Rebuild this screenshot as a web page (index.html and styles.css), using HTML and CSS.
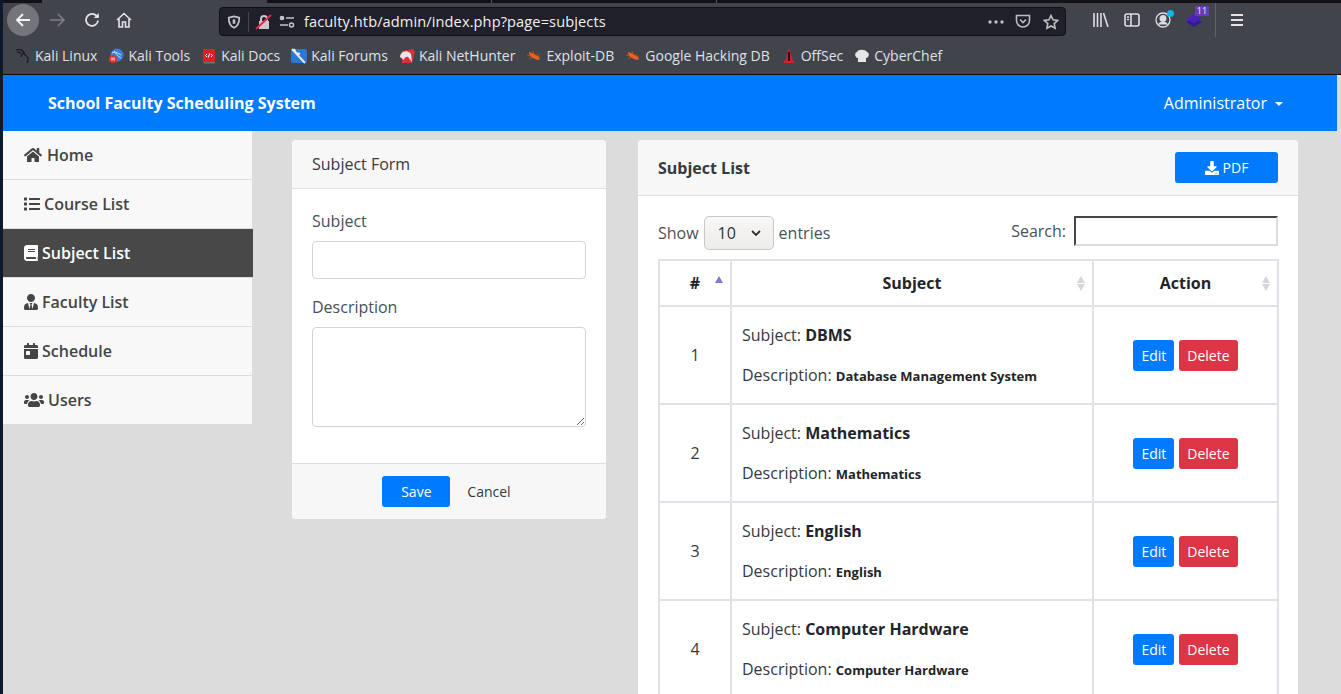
FILE: index.html
```html
<!DOCTYPE html>
<html lang="en">
  <head>
    <meta charset="UTF-8" />
    <title>School Faculty Scheduling System</title>
    <link rel="stylesheet" href="styles.css">
  </head>
  <body>
    <svg class="defs" aria-hidden="true">
      <symbol id="i-home" viewBox="0 0 576 512"><path d="M280.37 148.26L96 300.11V464a16 16 0 0 0 16 16l112.06-.29a16 16 0 0 0 15.92-16V368a16 16 0 0 1 16-16h64a16 16 0 0 1 16 16v95.64a16 16 0 0 0 16 16.05L464 480a16 16 0 0 0 16-16V300L295.67 148.26a12.19 12.19 0 0 0-15.3 0zM571.6 251.47L488 182.56V44.05a12 12 0 0 0-12-12h-56a12 12 0 0 0-12 12v72.61L318.47 43a48 48 0 0 0-61 0L4.34 251.47a12 12 0 0 0-1.6 16.9l25.5 31A12 12 0 0 0 45.15 301l235.22-193.74a12.19 12.19 0 0 1 15.3 0L530.9 301a12 12 0 0 0 16.9-1.6l25.5-31a12 12 0 0 0-1.7-16.93z"/></symbol>
      <symbol id="i-list" viewBox="0 0 512 512"><path d="M80 368H16a16 16 0 0 0-16 16v64a16 16 0 0 0 16 16h64a16 16 0 0 0 16-16v-64a16 16 0 0 0-16-16zm0-320H16A16 16 0 0 0 0 64v64a16 16 0 0 0 16 16h64a16 16 0 0 0 16-16V64a16 16 0 0 0-16-16zm0 160H16a16 16 0 0 0-16 16v64a16 16 0 0 0 16 16h64a16 16 0 0 0 16-16v-64a16 16 0 0 0-16-16zm416 176H176a16 16 0 0 0-16 16v32a16 16 0 0 0 16 16h320a16 16 0 0 0 16-16v-32a16 16 0 0 0-16-16zm0-320H176a16 16 0 0 0-16 16v32a16 16 0 0 0 16 16h320a16 16 0 0 0 16-16V80a16 16 0 0 0-16-16zm0 160H176a16 16 0 0 0-16 16v32a16 16 0 0 0 16 16h320a16 16 0 0 0 16-16v-32a16 16 0 0 0-16-16z"/></symbol>
      <symbol id="i-book" viewBox="0 0 448 512"><path d="M448 360V24c0-13.3-10.7-24-24-24H96C43 0 0 43 0 96v320c0 53 43 96 96 96h328c13.3 0 24-10.7 24-24v-16c0-7.5-3.5-14.3-8.9-18.7-4.2-15.4-4.2-59.3 0-74.7 5.4-4.3 8.9-11.1 8.9-18.6zM128 134c0-3.3 2.7-6 6-6h212c3.3 0 6 2.7 6 6v20c0 3.3-2.7 6-6 6H134c-3.3 0-6-2.7-6-6v-20zm0 64c0-3.3 2.7-6 6-6h212c3.3 0 6 2.7 6 6v20c0 3.3-2.7 6-6 6H134c-3.3 0-6-2.7-6-6v-20zm253.4 250H96c-17.7 0-32-14.3-32-32 0-17.6 14.4-32 32-32h285.4c-1.9 17.1-1.9 46.9 0 64z"/></symbol>
      <symbol id="i-user" viewBox="0 0 448 512"><path d="M224 256c70.7 0 128-57.3 128-128S294.7 0 224 0 96 57.3 96 128s57.3 128 128 128zm95.8 32.6L272 480l-32-136 32-56h-96l32 56-32 136-47.8-191.4C56.9 292 0 350.3 0 422.4V464c0 26.5 21.5 48 48 48h352c26.5 0 48-21.5 48-48v-41.6c0-72.1-56.9-130.4-128.2-133.8z"/></symbol>
      <symbol id="i-cal" viewBox="0 0 448 512"><path d="M0 464c0 26.5 21.5 48 48 48h352c26.5 0 48-21.5 48-48V192H0v272zm64-192c0-8.8 7.2-16 16-16h96c8.8 0 16 7.2 16 16v96c0 8.8-7.2 16-16 16H80c-8.8 0-16-7.2-16-16v-96zM400 64h-48V16c0-8.8-7.2-16-16-16h-32c-8.8 0-16 7.2-16 16v48H160V16c0-8.8-7.2-16-16-16h-32c-8.8 0-16 7.2-16 16v48H48C21.5 64 0 85.5 0 112v48h448v-48c0-26.5-21.5-48-48-48z"/></symbol>
      <symbol id="i-users" viewBox="0 0 640 512"><path d="M96 224c35.3 0 64-28.7 64-64s-28.7-64-64-64-64 28.7-64 64 28.7 64 64 64zm448 0c35.3 0 64-28.7 64-64s-28.7-64-64-64-64 28.7-64 64 28.7 64 64 64zm32 32h-64c-17.6 0-33.5 7.1-45.1 18.6 40.3 22.1 68.9 62 75.1 109.4h66c17.7 0 32-14.3 32-32v-32c0-35.3-28.7-64-64-64zm-256 0c61.9 0 112-50.1 112-112S381.9 32 320 32 208 82.1 208 144s50.1 112 112 112zm76.8 32h-8.3c-20.8 10-43.9 16-68.5 16s-47.6-6-68.5-16h-8.3C179.6 288 128 339.6 128 403.2V432c0 26.5 21.5 48 48 48h288c26.5 0 48-21.5 48-48v-28.8c0-63.6-51.6-115.2-115.2-115.2zm-223.7-13.4C161.5 263.1 145.6 256 128 256H64c-35.3 0-64 28.7-64 64v32c0 17.7 14.3 32 32 32h65.9c6.3-47.4 34.9-87.3 75.2-109.4z"/></symbol>
      <symbol id="i-download" viewBox="0 0 512 512"><path d="M216 0h80c13.3 0 24 10.7 24 24v168h87.7c17.8 0 26.7 21.5 14.1 34.1L269.7 378.3c-7.5 7.5-19.8 7.5-27.3 0L90.1 226.1c-12.6-12.6-3.7-34.1 14.1-34.1H192V24c0-13.3 10.7-24 24-24zm296 376v112c0 13.3-10.7 24-24 24H24c-13.3 0-24-10.7-24-24V376c0-13.3 10.7-24 24-24h146.7l49 49c20.1 20.1 52.5 20.1 72.6 0l49-49H488c13.3 0 24 10.7 24 24zm-124 88c0-11-9-20-20-20s-20 9-20 20 9 20 20 20 20-9 20-20zm64 0c0-11-9-20-20-20s-20 9-20 20 9 20 20 20 20-9 20-20z"/></symbol>
      <symbol id="i-bug" viewBox="0 0 16 16"><path fill="#e8601c" d="M3 4l3 1 4 2 3 2 1 2-2 1-3-1-4-2-2-3z"/><path stroke="#c9480f" fill="none" d="M1 7l3 1M3 11l3-2M7 3l1 3M12 6l-1 2M14 8l-2 1"/></symbol>
    </svg>

    <div class="edge"></div>
    <div class="window">
      <div class="tabstrip">
        <span class="tab-dark tab-first"></span>
        <span class="tab-active"></span>
        <span class="tab-dark tab-mid"></span>
        <span class="tab-dark tab-mid"></span>
        <span class="tab-dark tab-rest"></span>
      </div>

      <div class="toolbar">
        <span class="nav-back">
          <svg width="16" height="16" viewBox="0 0 16 16" fill="none" stroke="#f2f2f2" stroke-width="1.8"><path d="M15 8H2M8 2L2 8l6 6"/></svg>
        </span>
        <svg class="nav-icon nav-fwd" width="16" height="16" viewBox="0 0 16 16" fill="none" stroke="#7d7e83" stroke-width="1.6"><path d="M0 8h14M8 2l6 6-6 6"/></svg>
        <svg class="nav-icon nav-reload" width="16" height="16" viewBox="0 0 16 16" fill="none" stroke="#e4e4e6" stroke-width="1.8"><path d="M14 8.5A6 6 0 1 1 11.5 3L14 5"/><path d="M14.8 1v5h-5" fill="#e4e4e6" stroke="none"/></svg>
        <svg class="nav-icon nav-home" width="16" height="16" viewBox="0 0 16 16" fill="none" stroke="#e4e4e6" stroke-width="1.6"><path d="M1 8l7-6.5L15 8M3 7v8h3.5v-5h3v5H13V7"/></svg>

        <div class="urlbar">
          <svg class="url-shield" width="14" height="14" viewBox="0 0 16 16" fill="none" stroke="#c4c4c8" stroke-width="2"><path d="M8 1.5l6 1.5c0 6-1.5 9.5-6 11.5C3.500 12.500 2 9 2 3z"/><path d="M8 5v5" stroke-width="3"/></svg>
          <span class="url-sep"></span>
          <svg class="url-lock" width="18" height="18" viewBox="0 0 18 18"><path d="M5 8V6a4 4 0 0 1 8 0v2h1v8H4V8zM7 8h4V6a2 2 0 0 0-4 0z" fill="#c8c8cc"/><path d="M1 16L16 2" stroke="#e22850" stroke-width="2"/></svg>
          <svg class="url-perm" width="16" height="14" viewBox="0 0 16 14" fill="none" stroke="#c4c4c8" stroke-width="1.500"><circle cx="3" cy="3" r="1.600" fill="#c4c4c8"/><path d="M7 3h8M1 10h8"/><circle cx="12.500" cy="10" r="2"/></svg>
          <span class="url-text">faculty.htb/admin/index.php?page=subjects</span>
          <svg class="url-dots" width="16" height="4" viewBox="0 0 16 4" fill="#bdbdc2"><circle cx="2" cy="2" r="1.700"/><circle cx="8" cy="2" r="1.700"/><circle cx="14" cy="2" r="1.700"/></svg>
          <svg class="url-pocket" width="16" height="15" viewBox="0 0 16 15" fill="none" stroke="#bdbdc2" stroke-width="1.600"><path d="M1.500 1.500h13v5a6.500 6.500 0 0 1-13 0z"/><path d="M5 5.500l3 3 3-3"/></svg>
          <svg class="url-star" width="16" height="16" viewBox="0 0 16 16" fill="none" stroke="#bdbdc2" stroke-width="1.600"><path d="M8 1.500l2 4.300 4.700.6-3.500 3.200.9 4.700L8 12l-4.100 2.300.9-4.700L1.300 6.400 6 5.800z"/></svg>
        </div>

        <div class="tool-right">
          <svg width="16" height="14" viewBox="0 0 16 14" fill="none" stroke="#dcdce0" stroke-width="1.600"><path d="M1 0v14M4.500 0v14M8 0v14M10.500 0l4.500 14"/></svg>
          <svg width="16" height="14" viewBox="0 0 16 14" fill="none" stroke="#dcdce0" stroke-width="1.600"><rect x="1" y="1" width="14" height="12" rx="2"/><path d="M7 1v12M3 4h2M3 6.500h2"/></svg>
          <span class="tool-account">
            <svg width="16" height="16" viewBox="0 0 16 16" fill="none" stroke="#dcdce0" stroke-width="1.300"><circle cx="8" cy="8" r="7"/><circle cx="8" cy="6.500" r="2.800" fill="#dcdce0"/><path d="M3.500 12.500c2-3 7-3 9 0" fill="#dcdce0"/></svg>
            <span class="account-dot"></span>
          </span>
          <span class="tool-ext">
            <svg width="16" height="16" viewBox="0 0 16 16"><path d="M0 10l8-5 8 5-8 5z" fill="#2f1a8f"/><path d="M0 6.500l8-5 8 5-8 5z" fill="#4a22b8"/></svg>
            <span class="ext-badge">11</span>
          </span>
          <span class="tool-sep"></span>
          <svg width="12" height="12" viewBox="0 0 12 12" fill="#e4e4e6"><rect width="12" height="2" y="0"/><rect width="12" height="2" y="5"/><rect width="12" height="2" y="10"/></svg>
        </div>
      </div>

      <div class="bookmarks">
        <a class="bm">
          <svg width="16" height="16" viewBox="0 0 16 16" fill="none" stroke="#15161a" stroke-width="1.200"><path d="M1 2c4-1 7 0 8 3s3 3 4 5-1 4-1 5M9 5C7 6 6 7 6 9M2 4c2 0 3 1 4 1"/></svg>
          Kali Linux
        </a>
        <a class="bm">
          <svg width="16" height="16" viewBox="0 0 16 16"><circle cx="9" cy="7" r="6.500" fill="#3a7fd8"/><path d="M4 5c3-2 6 0 9 2M6 3c2 2 4 6 7 7" stroke="#cfe2f7" fill="none"/><circle cx="5" cy="11" r="4" fill="#e5322d"/><path d="M4 9.500v3M6 9.500v3" stroke="#fff"/></svg>
          Kali Tools
        </a>
        <a class="bm">
          <svg width="16" height="16" viewBox="0 0 16 16"><path d="M2 1h12v13H3.500L2 15z" fill="#d8222a"/><rect x="3" y="14" width="11" height="1.500" fill="#6e6e74"/><path d="M6 6L4.500 7.500 6 9M10 6l1.500 1.500L10 9M8.700 5.500L7.300 9.500" stroke="#fff" fill="none"/></svg>
          Kali Docs
        </a>
        <a class="bm">
          <svg width="16" height="16" viewBox="0 0 16 16"><rect y="1" width="16" height="14" rx="2" fill="#2b76d9"/><path d="M1 1l13 14M3 1l2 4 4 1" stroke="#e8e8e8" stroke-width="2" fill="none"/></svg>
          Kali Forums
        </a>
        <a class="bm">
          <svg width="16" height="16" viewBox="0 0 16 16"><path d="M3 3l11-2 2 3-3 11H3z" fill="#d8313a"/><path d="M1 9a6 6 0 0 1 11-3l1 8-4-5a3 3 0 0 0-4 3z" fill="#e8e8e8"/></svg>
          Kali NetHunter
        </a>
        <a class="bm">
          <svg width="16" height="16"><use href="#i-bug"/></svg>
          Exploit-DB
        </a>
        <a class="bm">
          <svg width="16" height="16"><use href="#i-bug"/></svg>
          Google Hacking DB
        </a>
        <a class="bm">
          <svg width="16" height="16" viewBox="0 0 16 16"><path d="M8 0l2 6 1 5 3 4H2l3-4 1-5z" fill="#d3202a"/><path d="M8 4v9" stroke="#2a1013" stroke-width="2"/></svg>
          OffSec
        </a>
        <a class="bm">
          <svg width="16" height="16" viewBox="0 0 16 16"><path d="M4 10C1 10 0 5 3 4c1-3 8-3 10 0 3 1 2 6-1 6v4H4z" fill="#e6e6e6"/></svg>
          CyberChef
        </a>
      </div>

      <div class="page">
        <nav class="topbar">
          <span class="brand">School Faculty Scheduling System</span>
          <span class="admin">Administrator<i class="caret"></i></span>
        </nav>

        <div class="content">
          <aside class="sidebar">
            <a class="side-link"><svg class="side-icon icon-home"><use href="#i-home"/></svg>Home</a>
            <a class="side-link"><svg class="side-icon"><use href="#i-list"/></svg>Course List</a>
            <a class="side-link active"><svg class="side-icon icon-narrow"><use href="#i-book"/></svg>Subject List</a>
            <a class="side-link"><svg class="side-icon icon-narrow"><use href="#i-user"/></svg>Faculty List</a>
            <a class="side-link"><svg class="side-icon icon-narrow"><use href="#i-cal"/></svg>Schedule</a>
            <a class="side-link"><svg class="side-icon icon-users"><use href="#i-users"/></svg>Users</a>
          </aside>

          <main class="panels">
            <section class="card form-card">
              <div class="card-head form-head">Subject Form</div>
              <div class="form-body">
                <label class="field-label">Subject</label>
                <input class="field-input" type="text" />
                <label class="field-label">Description</label>
                <textarea class="field-area"></textarea>
              </div>
              <div class="card-foot">
                <button class="btn btn-blue btn-save">Save</button>
                <button class="btn btn-plain">Cancel</button>
              </div>
            </section>

            <section class="card list-card">
              <div class="card-head list-head">
                <b>Subject List</b>
                <button class="btn btn-blue btn-pdf"><svg class="pdf-icon"><use href="#i-download"/></svg>PDF</button>
              </div>
              <div class="list-body">
                <div class="table-tools">
                  <div class="show-len">
                    Show
                    <span class="select-wrap">
                      <select class="len-select"><option>10</option></select>
                      <svg class="select-arrow" width="10" height="6" viewBox="0 0 10 6" fill="none" stroke="#2e3436" stroke-width="1.800"><path d="M1 1l4 4 4-4"/></svg>
                    </span>
                    entries
                  </div>
                  <label class="search-box">Search:<input class="search-input" type="search" /></label>
                </div>
                <table class="subjects">
                  <thead>
                    <tr>
                      <th class="col-num">#<i class="sort sort-up"></i></th>
                      <th class="col-subject">Subject<i class="sort sort-both"></i></th>
                      <th class="col-action">Action<i class="sort sort-both"></i></th>
                    </tr>
                  </thead>
                  <tbody>
                    <tr>
                      <td class="cell-num">1</td>
                      <td><p>Subject: <b>DBMS</b></p><p>Description: <small>Database Management System</small></p></td>
                      <td class="cell-act"><button class="btn btn-blue btn-sm">Edit</button><button class="btn btn-red btn-sm">Delete</button></td>
                    </tr>
                    <tr>
                      <td class="cell-num">2</td>
                      <td><p>Subject: <b>Mathematics</b></p><p>Description: <small>Mathematics</small></p></td>
                      <td class="cell-act"><button class="btn btn-blue btn-sm">Edit</button><button class="btn btn-red btn-sm">Delete</button></td>
                    </tr>
                    <tr>
                      <td class="cell-num">3</td>
                      <td><p>Subject: <b>English</b></p><p>Description: <small>English</small></p></td>
                      <td class="cell-act"><button class="btn btn-blue btn-sm">Edit</button><button class="btn btn-red btn-sm">Delete</button></td>
                    </tr>
                    <tr>
                      <td class="cell-num">4</td>
                      <td><p>Subject: <b>Computer Hardware</b></p><p>Description: <small>Computer Hardware</small></p></td>
                      <td class="cell-act"><button class="btn btn-blue btn-sm">Edit</button><button class="btn btn-red btn-sm">Delete</button></td>
                    </tr>
                  </tbody>
                </table>
              </div>
            </section>
          </main>
        </div>
      </div>
    </div>
  </body>
</html>
```

FILE: styles.css
```css
* {
  box-sizing: border-box;
}
html,
body {
  margin: 0;
  height: 100%;
  overflow: hidden;
}
body {
  display: flex;
  font-family: "Open Sans", "Noto Sans", sans-serif;
  font-size: 16px;
  line-height: 1.5;
  color: #212529;
  background-color: #dcdcdc;
}
.defs {
  display: none;
}
.edge {
  width: 3px;
  flex: none;
  background-color: #0d1a2c;
}
.window {
  flex: 1;
  min-width: 0;
  display: flex;
  flex-direction: column;
}

/* browser chrome */
.tabstrip {
  height: 3px;
  flex: none;
  display: flex;
}
.tab-dark {
  background-color: #121216;
  border-right: 1px solid #55565c;
}
.tab-first {
  width: 39px;
  border-right: none;
}
.tab-active {
  width: 225px;
  background-color: #42444c;
}
.tab-mid {
  width: 225px;
}
.tab-rest {
  flex: 1;
  border-right: none;
}
.toolbar {
  height: 34px;
  flex: none;
  display: flex;
  align-items: center;
  background-color: #42444c;
  position: relative;
}
.nav-back {
  width: 32px;
  height: 32px;
  margin-left: 4px;
  border-radius: 50%;
  background-color: #74757a;
  display: flex;
  align-items: center;
  justify-content: center;
}
.nav-icon {
  flex: none;
}
.nav-fwd {
  margin-left: 11px;
}
.nav-reload {
  margin-left: 18px;
}
.nav-home {
  margin-left: 16px;
}
.urlbar {
  width: 847px;
  height: 29px;
  margin-left: 87px;
  margin-top: 3px;
  display: flex;
  align-items: center;
  background-color: #1f2029;
  border: 1px solid #0f1014;
  border-radius: 4px;
  color: #f0f0f2;
  font-size: 14.5px;
}
.url-shield {
  margin-left: 7px;
}
.url-sep {
  width: 1px;
  height: 20px;
  margin-left: 7px;
  background-color: #45464c;
}
.url-lock {
  margin-left: 6px;
}
.url-perm {
  margin-left: 6px;
}
.url-text {
  margin-left: 9px;
  flex: 1;
  font-size: 14.6px;
  letter-spacing: 0.1px;
}
.url-dots {
  margin-right: 11px;
}
.url-pocket {
  margin-right: 12px;
}
.url-star {
  margin-right: 6px;
}
.tool-right {
  margin-left: 27px;
  display: flex;
  align-items: center;
  gap: 15px;
}
.tool-account,
.tool-ext {
  display: flex;
  position: relative;
}
.account-dot {
  position: absolute;
  top: -2px;
  right: -3px;
  width: 7px;
  height: 7px;
  border-radius: 50%;
  background-color: #12b5ee;
}
.ext-badge {
  position: absolute;
  top: -6px;
  left: 9px;
  width: 14px;
  height: 10px;
  background-color: #6a3ab8;
  color: #f2eaff;
  font-size: 9px;
  line-height: 10px;
  text-align: center;
  border-radius: 1px;
}
.tool-sep {
  width: 1px;
  height: 34px;
  margin-left: -2px;
  background-color: #62636a;
}
.bookmarks {
  height: 38px;
  flex: none;
  display: flex;
  align-items: center;
  gap: 11px;
  padding-left: 12px;
  background-color: #42444c;
  border-bottom: 1px solid #0c0c0e;
  color: #dfe1e4;
  font-size: 14px;
}
.bm {
  display: flex;
  align-items: center;
  gap: 4px;
}

/* page */
.page {
  flex: 1;
  min-height: 0;
  padding-right: 4px;
  position: relative;
}
.topbar {
  height: 56px;
  display: flex;
  align-items: center;
  justify-content: space-between;
  padding: 0 54px 0 45px;
  background-color: #007bff;
  color: #fff;
}
.brand {
  font-weight: 700;
}
.caret {
  display: inline-block;
  margin-left: 8px;
  vertical-align: 3px;
  border-top: 4px solid #fff;
  border-left: 4px solid transparent;
  border-right: 4px solid transparent;
}
.content {
  display: flex;
  align-items: flex-start;
}
.sidebar {
  width: 250px;
  flex: none;
}
.side-link {
  height: 49px;
  display: flex;
  align-items: center;
  padding-left: 21px;
  background-color: #f8f8f8;
  border-bottom: 1px solid #dcdcdc;
  color: #454545;
  font-weight: 600;
  margin-right: 1px;
}
.side-link.active {
  background-color: #484848;
  color: #fff;
  margin-right: 0;
}
.side-icon {
  width: 16px;
  height: 16px;
  margin-right: 4px;
  fill: currentColor;
}
.icon-home {
  width: 18px;
  margin-right: 5px;
}
.icon-narrow {
  width: 14px;
}
.icon-users {
  width: 20px;
}
.panels {
  display: flex;
  align-items: flex-start;
  gap: 32px;
  margin: 9px 0 0 39px;
}
.card {
  background-color: #fff;
  border-radius: 4px;
  overflow: hidden;
}
.form-card {
  width: 314px;
}
.list-card {
  width: 660px;
}
.card-head {
  background-color: #f7f7f7;
  border-bottom: 1px solid #dfdfdf;
  padding: 0 20px;
  display: flex;
  align-items: center;
  color: #343a40;
}
.form-head {
  height: 49px;
}
.list-head {
  height: 56px;
  justify-content: space-between;
}
.form-body {
  padding: 20px 20px 36px;
  color: #495057;
}
.field-label {
  display: block;
  margin-bottom: 8px;
}
.field-input,
.field-area {
  display: block;
  width: 100%;
  border: 1px solid #ced4da;
  border-radius: 4px;
  font: inherit;
  background-color: #fff;
}
.field-input {
  height: 38px;
  margin-bottom: 16px;
}
.field-area {
  height: 100px;
}
.card-foot {
  height: 56px;
  display: flex;
  align-items: center;
  justify-content: center;
  gap: 0;
  padding-left: 3px;
  background-color: #f7f7f7;
  border-top: 1px solid #dfdfdf;
}
.btn {
  height: 31px;
  padding: 0 8px;
  border: none;
  border-radius: 3px;
  font-family: inherit;
  font-size: 14px;
  color: #fff;
  background: none;
}
.btn-blue {
  background-color: #007bff;
}
.btn-red {
  background-color: #dc3545;
}
.btn-plain {
  color: #343a40;
  margin-left: 9px;
}
.btn-save {
  width: 68px;
}
.btn-pdf {
  width: 103px;
  display: flex;
  align-items: center;
  justify-content: center;
}
.pdf-icon {
  width: 14px;
  height: 14px;
  margin-right: 4px;
  fill: #fff;
}
.btn-sm {
  margin: 0 2.5px;
}
.list-body {
  padding: 20px;
}
.table-tools {
  height: 43px;
  display: flex;
  justify-content: space-between;
  align-items: flex-start;
  color: #495057;
}
.show-len {
  display: flex;
  align-items: center;
  gap: 5px;
}
.select-wrap {
  display: flex;
  position: relative;
}
.len-select {
  width: 70px;
  height: 34px;
  padding-left: 13px;
  appearance: none;
  border: 1px solid #cdc7c2;
  border-radius: 5px;
  background: linear-gradient(#f8f7f6, #eeecea);
  font: inherit;
  color: #2e3436;
}
.select-arrow {
  position: absolute;
  right: 13px;
  top: 14px;
}
.search-box {
  display: flex;
  align-items: center;
  gap: 8px;
  height: 30px;
}
.search-input {
  width: 204px;
  height: 30px;
  border: 2px inset #dcdcdc;
  border-top-color: #999;
  border-left-color: #999;
  background-color: #fff;
}
.subjects {
  width: 621px;
  border-collapse: collapse;
  table-layout: fixed;
}
.subjects th,
.subjects td {
  border: 2px solid #dfe2e6;
  padding: 12px 10px;
  position: relative;
}
.subjects th {
  height: 46px;
  padding: 0;
  text-align: center;
  font-weight: 700;
  border-bottom: 1px solid #111;
}
.col-num {
  width: 72px;
}
.col-action {
  width: 185px;
}
.subjects td {
  height: 98px;
  color: #343a40;
}
.subjects p {
  margin: 0 0 16px;
}
.subjects p:last-child {
  margin-bottom: 0;
}
.subjects b {
  color: #212529;
}
.subjects small {
  font-size: 13px;
  font-weight: 700;
  color: #212529;
}
.cell-num,
.cell-act {
  text-align: center;
}
.sort {
  position: absolute;
  right: 6px;
  top: 15px;
  width: 9px;
  height: 15px;
}
.sort-up::before,
.sort-both::before,
.sort-both::after {
  content: "";
  position: absolute;
  left: 0;
  border-left: 4.5px solid transparent;
  border-right: 4.500px solid transparent;
}
.sort-up::before {
  top: 0;
  border-bottom: 7px solid #7a7ad8;
}
.sort-both::before {
  top: 0;
  border-bottom: 7px solid #d4d6da;
}
.sort-both::after {
  bottom: 0;
  border-top: 7px solid #d4d6da;
}
```
